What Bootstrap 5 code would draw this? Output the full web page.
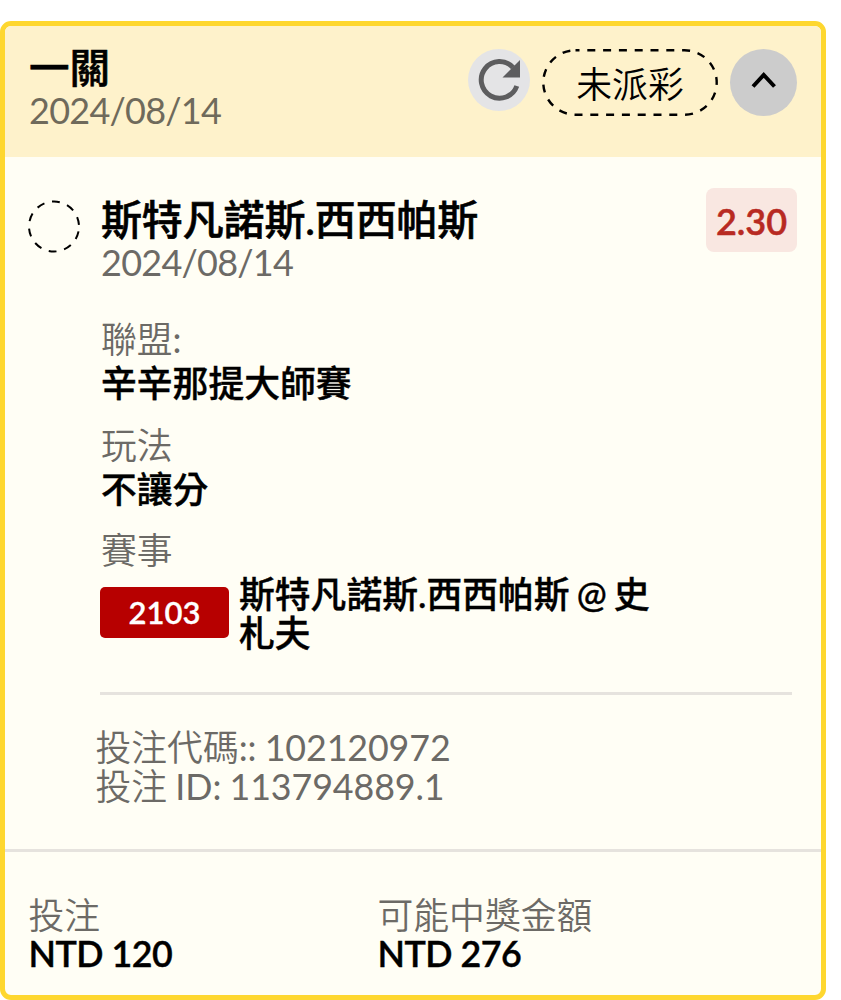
<!DOCTYPE html>
<html lang="zh-Hant">
<head>
<meta charset="utf-8">
<meta name="viewport" content="width=device-width, initial-scale=1">
<title>投注</title>
<link href="https://cdn.jsdelivr.net/npm/bootstrap@5.3.0/dist/css/bootstrap.min.css" rel="stylesheet">
<style>
body{background:#fff;color:#000;font-family:Lato,"Noto Sans CJK TC",sans-serif;font-size:35.8px;line-height:44px;overflow:hidden}
.slip{width:826px;height:979px;margin-top:21px;border:5px solid #fed72f;border-radius:11px;background:#fffef5;overflow:hidden}
.slip-head{height:131px;padding:20px 24px 0;background:#fef2cb}
.head-title{font-size:40.5px;font-weight:500;-webkit-text-stroke:.6px #000}
.date{font-size:36px;line-height:40px;font-weight:400;color:#6c6a66;letter-spacing:-.75px}
.slip-head .date{color:#6f6a5b}
.tools{gap:12px;margin-top:3px}
.round-btn{border:0;padding:0;border-radius:50%;flex:none}
.refresh{width:62px;height:62px;background:#e4e4e6}
.toggle{width:67px;height:67px;background:#ccc}
.pill{width:176px;height:67px;padding-top:5px;position:relative;font-weight:350}
.pill svg{position:absolute;inset:0}
.pick{padding:31px 24px 0 23px}
.ring{width:53px;height:53px;margin-top:12px;flex:none}
.pick-name{font-size:41px;font-weight:500;margin-top:10px;line-height:44px;letter-spacing:-.15px;-webkit-text-stroke:.6px #000}
.odds{width:91px;height:64px;padding-top:2px;border-radius:8px;background:#f9e7e1;color:#b82a22;font-size:36px;font-weight:600;-webkit-text-stroke:.5px #b82a22}
.details{margin:36px 29px 0 96px}
.field{margin-bottom:17.5px}
.lab{color:#6c6a66;font-weight:350}
.reg{font-weight:400}
.val{font-weight:500;-webkit-text-stroke:.4px #000}
.lat{font-weight:600;margin-top:-1px;letter-spacing:-.5px;-webkit-text-stroke:.4px #000}
.event{line-height:39px;margin:2.5px 0 0 -1px}
.event .val{word-spacing:-2px;margin-top:-1px}
.code{width:129px;height:51px;border-radius:5px;background:#b70000;color:#fff;font-size:31px;font-weight:600;-webkit-text-stroke:.3px #fff;margin:0 10px 3px 0;flex:none}
.rule{height:3px;background:#e6e3de;margin:39px 0 0 -1px}
.ids{margin:33px 0 0 90.5px;line-height:39px;color:#6c6a66;font-weight:350;word-spacing:-.8px}
.ids .reg{letter-spacing:-.1px}
.totals{margin-top:43px;border-top:3px solid #e6e3de;padding:44px 24px 0 23.5px;line-height:39px}
.stake{width:349px}
</style>
</head>
<body>
<main class="slip">
  <header class="slip-head d-flex justify-content-between align-items-start">
    <div>
      <div class="head-title">一關</div>
      <div class="date">2024/08/14</div>
    </div>
    <div class="tools d-flex align-items-start">
      <button class="round-btn refresh" aria-label="refresh"><svg class="d-block" width="62" height="62" viewBox="0 0 62 62"><path d="M45 18.5A18.3 18.3 0 1 0 48.8 37" fill="none" stroke="#5d5d5f" stroke-width="5"/><path d="M52 11v17.5H34.5z" fill="#5d5d5f"/></svg></button>
      <div class="pill d-flex align-items-center justify-content-center"><svg width="176" height="67"><rect x="1.3" y="1.3" width="173.4" height="64.4" rx="32.2" fill="none" stroke="#000" stroke-width="2.4" stroke-dasharray="8 7.8" stroke-dashoffset="4"/></svg><span>未派彩</span></div>
      <button class="round-btn toggle" aria-label="toggle"><svg class="d-block" width="67" height="67" viewBox="0 0 67 67"><path d="M23 37.5 33.7 26 44.5 37.5" fill="none" stroke="#000" stroke-width="4"/></svg></button>
    </div>
  </header>
  <section class="pick d-flex align-items-start">
    <svg class="ring" viewBox="0 0 53 53"><circle cx="26" cy="26.5" r="25" fill="none" stroke="#000" stroke-width="2" stroke-dasharray="8 7.71" stroke-dashoffset="-5"/></svg>
    <div class="ms-3 ps-1 flex-grow-1">
      <div class="pick-name">斯特凡諾斯.西西帕斯</div>
      <div class="date">2024/08/14</div>
    </div>
    <div class="odds d-flex align-items-center justify-content-center">2.30</div>
  </section>
  <section class="details">
    <div class="field"><div class="lab">聯盟<span class="reg">:</span></div><div class="val">辛辛那提大師賽</div></div>
    <div class="field"><div class="lab">玩法</div><div class="val">不讓分</div></div>
    <div class="lab">賽事</div>
    <div class="event d-flex align-items-center">
      <div class="code d-flex align-items-center justify-content-center">2103</div>
      <div class="val">斯特凡諾斯.西西帕斯 @ 史<br>札夫</div>
    </div>
    <div class="rule"></div>
  </section>
  <section class="ids"><div>投注代碼<span class="reg">:: 102120972</span></div><div>投注<span class="reg"> ID: 113794889.1</span></div></section>
  <footer class="totals d-flex">
    <div class="stake"><div class="lab">投注</div><div class="lat">NTD 120</div></div>
    <div><div class="lab">可能中獎金額</div><div class="lat">NTD 276</div></div>
  </footer>
</main>
<script src="https://cdn.jsdelivr.net/npm/bootstrap@5.3.0/dist/js/bootstrap.bundle.min.js"></script>
</body>
</html>
